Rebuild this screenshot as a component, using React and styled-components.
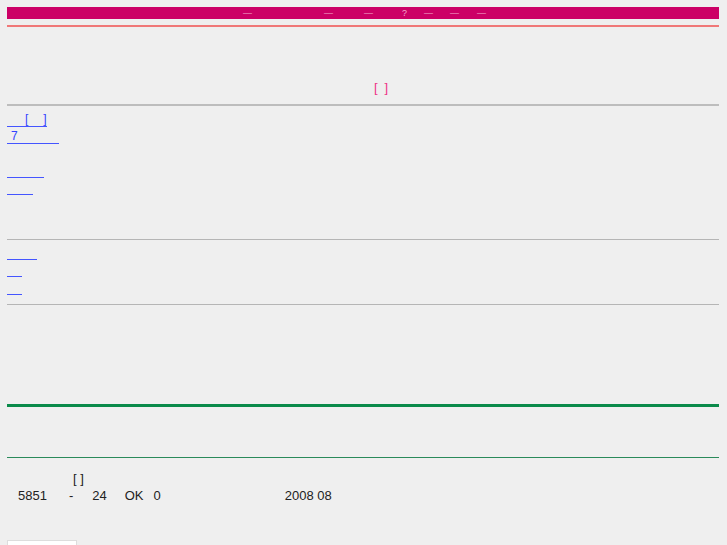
import React from "react";
import styled, { createGlobalStyle } from "styled-components";

const Global = createGlobalStyle`
  html, body { margin: 0; padding: 0; background: #efefef; }
  body { font-family: "Liberation Sans", Arial, "Noto Sans CJK JP", sans-serif; font-size: 12px; color: #222; }
`;

const Page = styled.div`
  padding: 7px 8px 0 7px;
  height: 545px;
  box-sizing: border-box;
  overflow: hidden;
`;

const TopBar = styled.div`
  height: 12px;
  background: #cc0066;
  display: flex;
  align-items: center;
  padding-left: ${(p) => p.$offset}px;
  font-size: 9px;
  line-height: 12px;
  color: #f4a8cc;
`;

const Gap = styled.span`
  display: inline-block;
  width: ${(p) => p.$w}px;
  flex: none;
`;

const Rule = styled.div`
  height: ${(p) => p.$h || 1}px;
  background: ${(p) => p.$c};
  margin-top: ${(p) => p.$mt || 0}px;
`;

const Title = styled.div`
  margin-top: 51px;
  height: 20px;
  display: flex;
  justify-content: center;
  color: #ee3388;
  font-size: 13px;
  line-height: 20px;
  padding-left: 36px;
`;

const LinkList = styled.div`
  display: flex;
  flex-direction: column;
  align-items: flex-start;
  margin-top: ${(p) => p.$mt || 0}px;
`;

const Link = styled.a`
  display: inline-flex;
  align-items: flex-end;
  color: #3344ff;
  text-decoration: none;
  border-bottom: 1px solid #4455ff;
  font-size: 12px;
  line-height: 14px;
  height: 16px;
  margin-top: ${(p) => p.$mt || 0}px;
  white-space: pre;
`;

const Info = styled.div`
  margin-top: 12px;
  font-size: 13px;
  line-height: 17px;
  color: #222;
`;

const InfoRow = styled.div`
  display: flex;
  white-space: pre;
`;

const WhiteBox = styled.div`
  margin-top: 36px;
  width: 68px;
  height: 20px;
  background: #fff;
  border: 1px solid #ddd;
`;

export default function App() {
  return (
    <>
      <Global />
      <Page>
        <TopBar $offset={236}>
          <span>—</span>
          <Gap $w={72} />
          <span>—</span>
          <Gap $w={31} />
          <span>—</span>
          <Gap $w={29} />
          <span>?</span>
          <Gap $w={17} />
          <span>—</span>
          <Gap $w={17} />
          <span>—</span>
          <Gap $w={18} />
          <span>—</span>
        </TopBar>
        <Rule $c="#f07878" $h={2} $mt={6} />
        <Title>
          <span>[</span>
          <Gap $w={7} />
          <span>]</span>
        </Title>
        <Rule $c="#bdbdbd" $h={2} $mt={6} />
        <LinkList $mt={4}>
          <Link href="#">
            <Gap $w={18} />[<Gap $w={15} />]
          </Link>
          <Link href="#">
            <Gap $w={4} />7<Gap $w={41} />
          </Link>
          <Link href="#" $mt={17}>
            <Gap $w={37} />
          </Link>
          <Link href="#">
            <Gap $w={26} />
          </Link>
        </LinkList>
        <Rule $c="#b5b5b5" $h={1} $mt={44} />
        <LinkList $mt={3}>
          <Link href="#">
            <Gap $w={30} />
          </Link>
          <Link href="#">
            <Gap $w={15} />
          </Link>
          <Link href="#" $mt={1}>
            <Gap $w={15} />
          </Link>
        </LinkList>
        <Rule $c="#b5b5b5" $h={1} $mt={9} />
        <Rule $c="#0a8a4a" $h={3} $mt={99} />
        <Rule $c="#2a8a5a" $h={1} $mt={50} />
        <Info>
          <InfoRow>
            <Gap $w={66} />[ ]
          </InfoRow>
          <InfoRow>
            <Gap $w={11} />5851<Gap $w={22} />-<Gap $w={19} />24<Gap $w={18} />OK<Gap $w={10} />0<Gap $w={124} />2008 08
          </InfoRow>
        </Info>
        <WhiteBox />
      </Page>
    </>
  );
}
